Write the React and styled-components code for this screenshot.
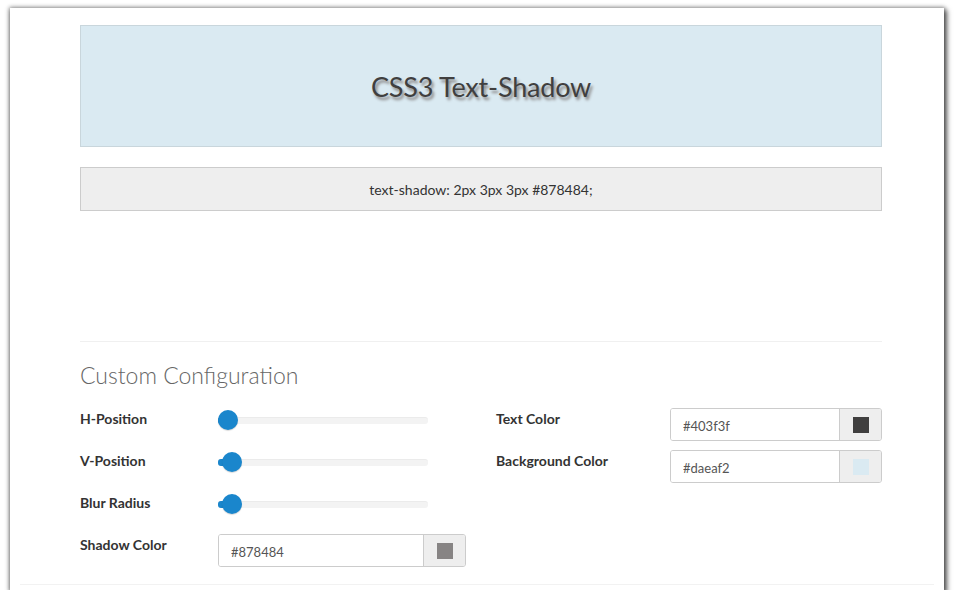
import React, { useState } from 'react'
import styled, { createGlobalStyle } from 'styled-components'

const GlobalStyle = createGlobalStyle`
  html, body {
    margin: 0;
    padding: 0;
    background: #ffffff;
  }
  body {
    font-family: Lato, "Open Sans", "Liberation Sans", sans-serif;
    color: #333333;
  }
`

const Window = styled.div`
  margin: 8px 10px 0 10px;
  height: 582px;
  background: #ffffff;
  box-shadow: 0 0 4px 1px rgba(0, 0, 0, 0.35), 2px 3px 5px 1px rgba(0, 0, 0, 0.6);
  padding: 17px 62px 0 70px;
  box-sizing: border-box;
  display: flex;
  flex-direction: column;
`

const Preview = styled.div`
  height: 122px;
  background: ${(p) => p.$bg};
  border: 1px solid #c9d6dc;
  box-sizing: border-box;
  display: flex;
  align-items: center;
  justify-content: center;
  font-size: 27px;
  color: ${(p) => p.$color};
  text-shadow: ${(p) => p.$shadow};
  letter-spacing: -0.2px;
`

const Code = styled.div`
  margin-top: 20px;
  height: 44px;
  background: #eeeeee;
  border: 1px solid #cccccc;
  box-sizing: border-box;
  display: flex;
  align-items: center;
  justify-content: center;
  font-size: 14px;
  color: #333333;
`

const Divider = styled.hr`
  margin: 130px 0 0 0;
  border: 0;
  border-top: 1px solid #f0f0f0;
`

const Heading = styled.h3`
  margin: 18px 0 0 0;
  font-size: 23px;
  font-weight: 300;
  color: #666666;
  line-height: 30px;
`

const Columns = styled.div`
  margin-top: 19px;
  display: grid;
  grid-template-columns: 386px 386px;
  column-gap: 30px;
`

const Column = styled.div`
  display: flex;
  flex-direction: column;
`

const Row = styled.div`
  display: grid;
  grid-template-columns: ${(p) => p.$labelWidth}px 1fr;
  height: 42px;
  align-items: start;
`

const Label = styled.label`
  font-size: 14px;
  font-weight: 700;
  color: #333333;
  line-height: 20px;
`

const SliderTrack = styled.div`
  position: relative;
  width: 210px;
  height: 6px;
  margin-top: 8px;
  background: #f3f3f3;
  border-top: 1px solid #ebebeb;
  border-radius: 3px;
`

const SliderFill = styled.div`
  position: absolute;
  left: 0;
  top: -1px;
  height: 7px;
  border-radius: 3px;
  background: #1a86cc;
`

const SliderThumb = styled.div`
  position: absolute;
  top: -8px;
  width: 20px;
  height: 20px;
  margin-left: -10px;
  border-radius: 50%;
  background: #1a86cc;
  box-shadow: 0 1px 1px rgba(0, 0, 0, 0.15);
`

const InputGroup = styled.div`
  display: flex;
  width: ${(p) => p.$width}px;
  height: 33px;
  margin-top: -1px;
  border: 1px solid #cccccc;
  border-radius: 3px;
  box-sizing: border-box;
  overflow: hidden;
`

const TextInput = styled.input`
  flex: 1;
  min-width: 0;
  border: 0;
  outline: none;
  padding: 2px 12px 0 12px;
  font-family: inherit;
  font-size: 13px;
  color: #555555;
  background: #ffffff;
`

const Addon = styled.div`
  width: 41px;
  border-left: 1px solid #cccccc;
  background: #eeeeee;
  display: flex;
  align-items: center;
  justify-content: center;
`

const Swatch = styled.span`
  width: 16px;
  height: 16px;
  background: ${(p) => p.$color};
`

const Footer = styled.div`
  margin-top: auto;
  margin-left: -60px;
  margin-right: -52px;
  height: 5px;
  border-top: 1px solid #f2f2f2;
`

const Slider = ({ value, max }) => {
  const center = 3 + (value / max) * 190
  return (
    <SliderTrack>
      <SliderFill style={{ width: `${center}px` }} />
      <SliderThumb style={{ left: `${center}px` }} />
    </SliderTrack>
  )
}

const ColorField = ({ value, width }) => (
  <InputGroup $width={width}>
    <TextInput defaultValue={value} />
    <Addon>
      <Swatch $color={value} />
    </Addon>
  </InputGroup>
)

export default function App() {
  const [h] = useState(2)
  const [v] = useState(3)
  const [blur] = useState(3)
  const shadowColor = '#878484'
  const textColor = '#403f3f'
  const bgColor = '#daeaf2'
  const shadow = `${h}px ${v}px ${blur}px ${shadowColor}`

  return (
    <>
      <GlobalStyle />
      <Window>
        <Preview $bg={bgColor} $color={textColor} $shadow={shadow}>
          CSS3 Text-Shadow
        </Preview>
        <Code>text-shadow: {shadow};</Code>
        <Divider />
        <Heading>Custom Configuration</Heading>
        <Columns>
          <Column>
            <Row $labelWidth={138}>
              <Label>H-Position</Label>
              <Slider value={h} max={54} />
            </Row>
            <Row $labelWidth={138}>
              <Label>V-Position</Label>
              <Slider value={v} max={54} />
            </Row>
            <Row $labelWidth={138}>
              <Label>Blur Radius</Label>
              <Slider value={blur} max={54} />
            </Row>
            <Row $labelWidth={138}>
              <Label>Shadow Color</Label>
              <ColorField value={shadowColor} width={248} />
            </Row>
          </Column>
          <Column>
            <Row $labelWidth={174}>
              <Label>Text Color</Label>
              <ColorField value={textColor} width={212} />
            </Row>
            <Row $labelWidth={174}>
              <Label>Background Color</Label>
              <ColorField value={bgColor} width={212} />
            </Row>
          </Column>
        </Columns>
        <Footer />
      </Window>
    </>
  )
}
